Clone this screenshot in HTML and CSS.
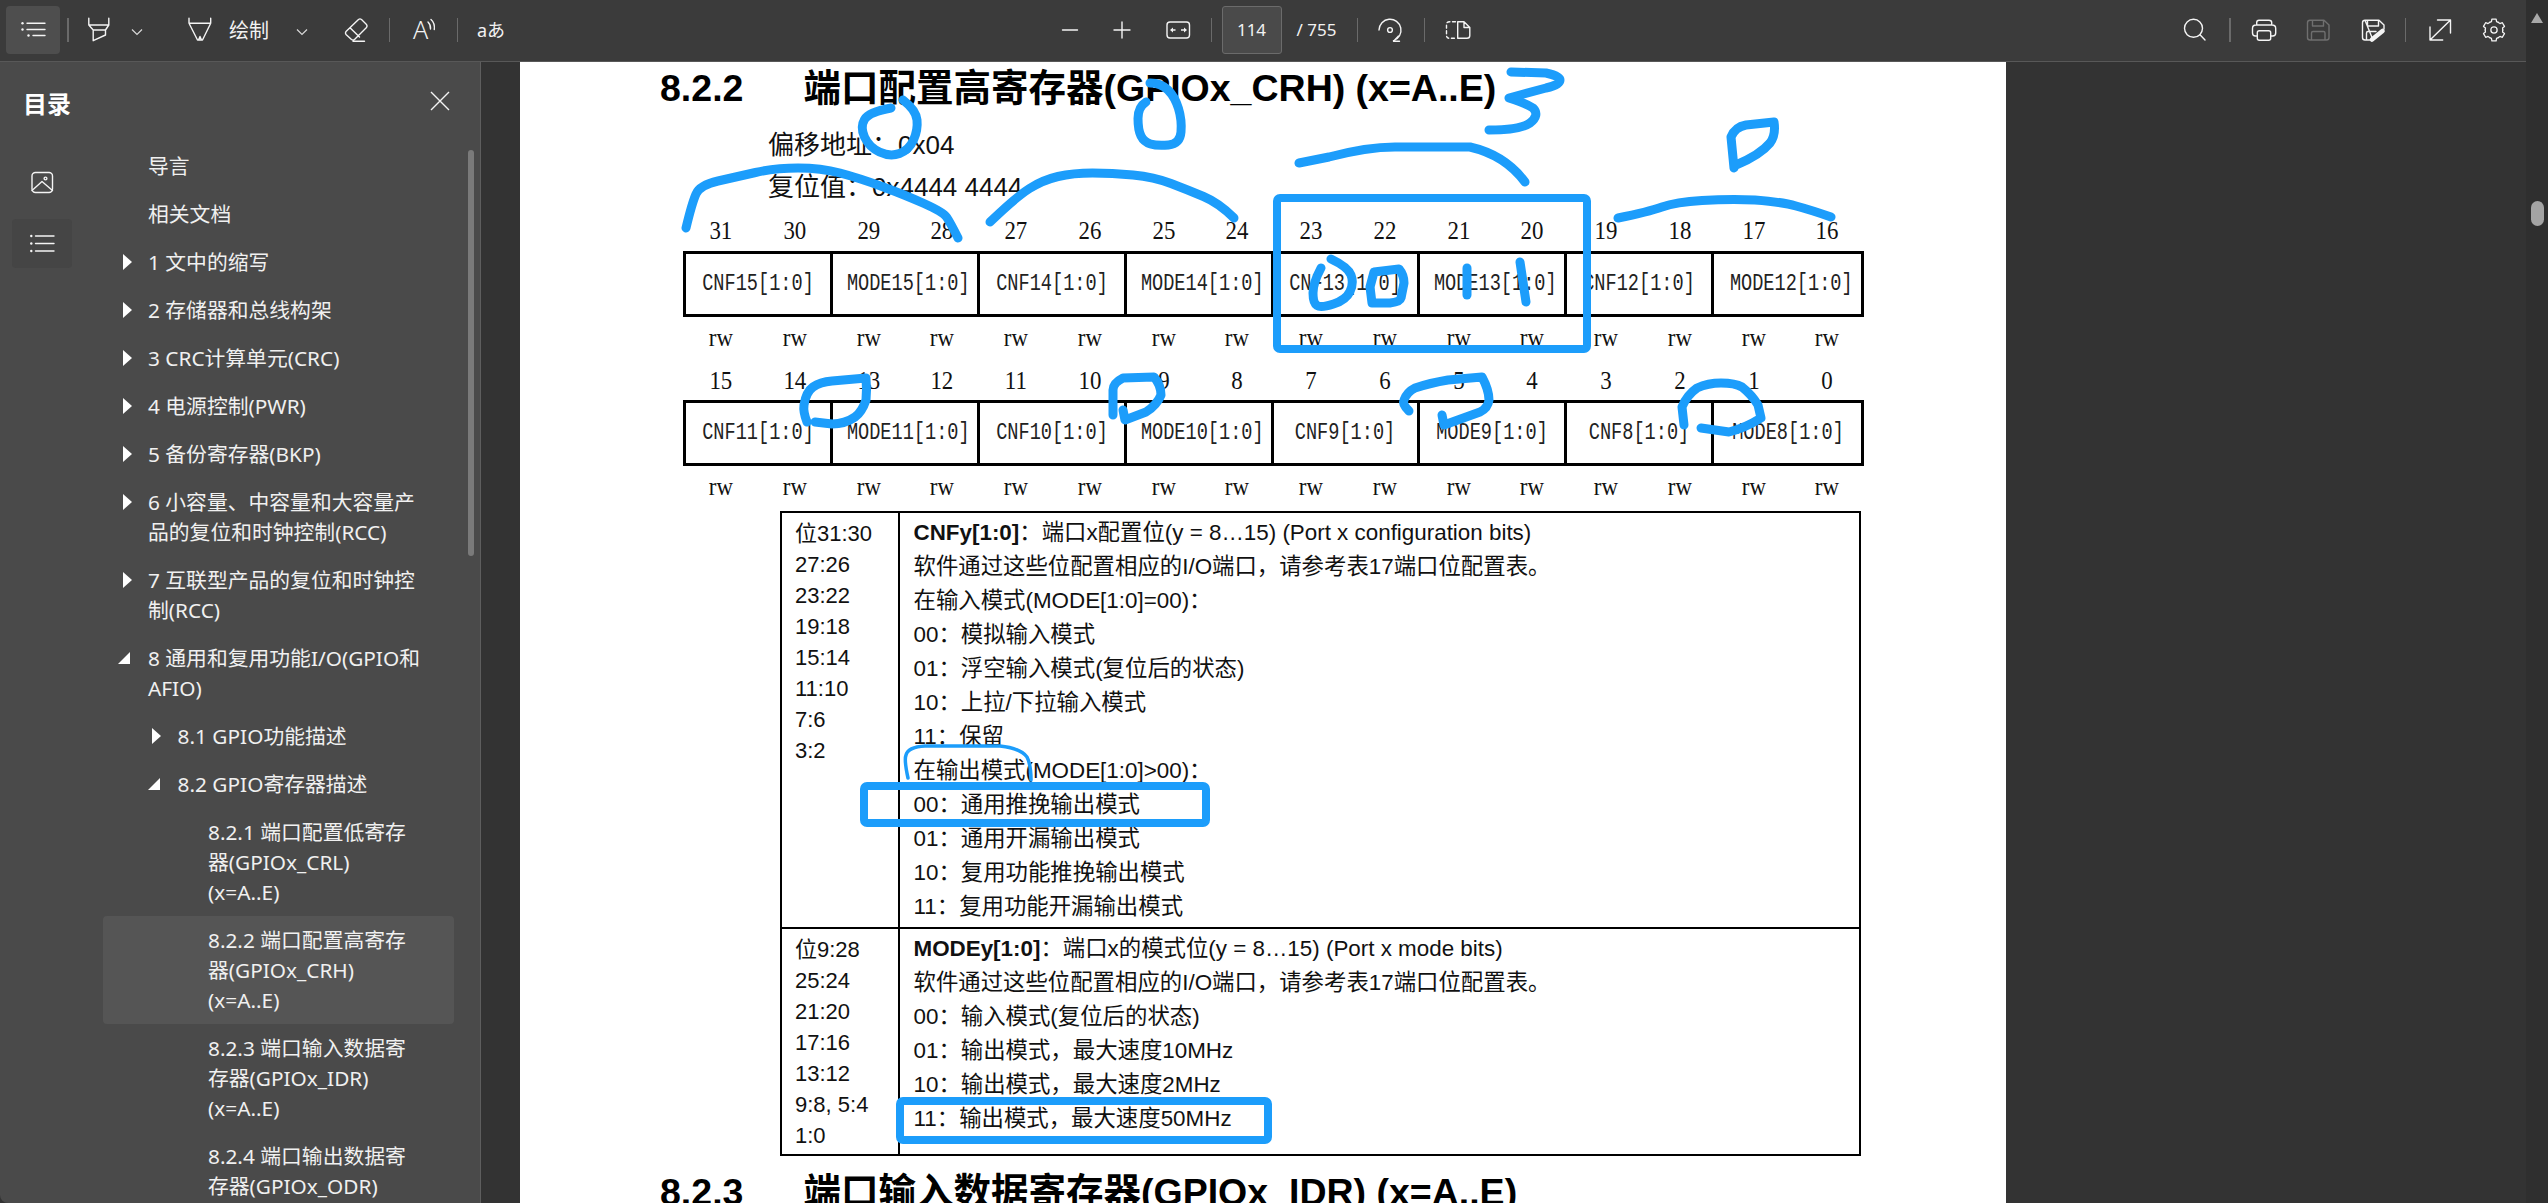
FILE: index.html
```html
<!DOCTYPE html>
<html lang="zh-CN">
<head>
<meta charset="utf-8">
<title>STM32 参考手册</title>
<link rel="stylesheet" href="styles.css">
</head>
<body>
<div class="app">
  <div class="window">
    <header class="toolbar">
      <div class="tb-group tb-left">
        <button class="tbtn tbtn-toggle"><svg class="ico" viewBox="21 18 24 24"><path d="M27 23.3H45M27 29.5H45M33 35.5H45"/><circle class="dot" cx="22.5" cy="23.3" r="1.2"/><circle class="dot" cx="22.5" cy="29.5" r="1.2"/><circle class="dot" cx="28.5" cy="35.5" r="1.2"/></svg></button>
        <span class="sep sep-a"></span>
        <button class="tbtn"><svg class="ico" viewBox="86.5 18 24 24"><path d="M88.3 18.3V25L92.7 30H105L108.3 25V18.3M88.3 25H108.3M92.7 30V40.7L105 35V30"/></svg></button>
        <svg class="chev" viewBox="0 0 20 24"><path d="M5 11.5L10 16.5L15 11.5"/></svg>
        <button class="tbtn tbtn-draw"><svg class="ico" viewBox="188 18 24 24"><path d="M189 18.3V23.3L197.5 40H202.5L210.7 23.3V18.3M189 23.3H210.7M198.5 40L200 36.5L201.5 40"/></svg></button>
        <span class="tb-label">绘制</span>
        <svg class="chev chev-draw" viewBox="0 0 20 24"><path d="M5 11.5L10 16.5L15 11.5"/></svg>
        <button class="tbtn tbtn-eraser"><svg class="ico" viewBox="344 18 24 24"><path d="M346 31.5L358.5 19.5Q360 18.3 361.5 19.5L366.5 24.5Q367.7 26 366.5 27.5L354.5 39.5Q353 40.5 351.5 39.5L346 34.5Q344.8 33 346 31.5ZM350 27.8L359.5 37M353 41.2H364.5"/></svg></button>
        <span class="sep sep-b"></span>
        <button class="tbtn"><svg class="ico" viewBox="413 18 24 24"><text class="ico-text" x="413" y="38.5">A</text><path d="M428 22Q431 25 430.5 29M431 19.5Q435 23 434.3 29.5"/></svg></button>
        <span class="sep sep-c"></span>
        <span class="tb-lang">aあ</span>
      </div>
      <div class="tb-group tb-center">
        <button class="tbtn"><svg class="ico" viewBox="1057.5 18 24 24"><path d="M1062 30H1077"/></svg></button>
        <button class="tbtn tbtn-plus"><svg class="ico" viewBox="1110 18 24 24"><path d="M1114 30H1130M1122 22V38"/></svg></button>
        <button class="tbtn tbtn-fit"><svg class="ico" viewBox="1165.5 18 24 24"><rect x="1166.5" y="22" width="22.5" height="16" rx="3"/><path class="fill" d="M1169.5 30L1172.5 27.5V29.3H1175V30.7H1172.5V32.5ZM1186.5 30L1183.5 27.5V29.3H1180.5V30.7H1183.5V32.5Z"/></svg></button>
        <span class="sep sep-d"></span>
        <div class="page-box">114</div>
        <span class="page-total">/ 755</span>
        <span class="sep sep-e"></span>
        <button class="tbtn"><svg class="ico" viewBox="1377 18 24 24"><path d="M1378 30A11 11 0 1 1 1392.5 40.7M1397.5 36L1392.5 41.2H1398.5"/><circle cx="1389" cy="30" r="2.4"/></svg></button>
        <span class="sep sep-f"></span>
        <button class="tbtn"><svg class="ico" viewBox="1445 18 24 24"><path d="M1456.7 21.7H1463L1468.8 27.5V35.5Q1468.8 38.3 1466 38.3H1456.7ZM1463 21.7V27.5H1468.8"/><path class="dash" d="M1454.5 21.7H1448.5Q1445.5 21.7 1445.5 24.7V35.3Q1445.5 38.3 1448.5 38.3H1454.5"/></svg></button>
      </div>
      <div class="tb-group tb-right">
        <button class="tbtn"><svg class="ico" viewBox="2184.5 18 24 24"><circle cx="2195" cy="28.3" r="9"/><path d="M2201.5 34.8L2206.5 40"/></svg></button>
        <span class="sep sep-g"></span>
        <button class="tbtn"><svg class="ico" viewBox="2252 18 24 24"><path d="M2256.7 25V22.5Q2256.7 20.3 2259 20.3H2269Q2271.7 20.3 2271.7 22.5V25M2257.3 36H2255.5Q2252.5 36 2252.5 33V28.5Q2252.5 25 2256 25H2272Q2275.7 25 2275.7 28.5V33Q2275.7 36 2272.7 36H2270.7"/><rect x="2257.3" y="30.7" width="13.4" height="9.5" rx="2"/></svg></button>
        <button class="tbtn tbtn-n"><svg class="ico ico-dim" viewBox="2306 18 24 24"><path d="M2310 20.3H2324L2329 25V37.5Q2329 40 2326.5 40H2310Q2307.5 40 2307.5 37.5V22.8Q2307.5 20.3 2310 20.3ZM2312.5 20.3V26H2323.5V20.3M2311.5 40V33Q2311.5 31.5 2313 31.5H2323.5Q2325 31.5 2325 33V40"/></svg></button>
        <button class="tbtn tbtn-m"><svg class="ico" viewBox="2361 18 24 24"><path d="M2365 20.3H2379L2384 25V29M2373 40H2365Q2362.5 40 2362.5 37.5V22.8Q2362.5 20.3 2365 20.3ZM2367.5 20.3V26H2378.5V20.3M2366.5 40V33Q2366.5 31.5 2368 31.5H2376"/><path class="pencil" d="M2372 39.5L2382.5 31"/></svg></button>
        <span class="sep sep-h"></span>
        <button class="tbtn"><svg class="ico" viewBox="2427 18 24 24"><path d="M2429 40L2449.5 20M2436.5 20H2449.5V33M2429 27V40H2441.7"/></svg></button>
        <button class="tbtn tbtn-n"><svg class="ico" viewBox="-13 -13 26 26"><defs><path id="tooth" d="M8.23 -4.75L9.08 -2.78L11.78 -2.29L11.78 2.29L9.08 2.78L8.23 4.75"/></defs><use href="#tooth" transform="rotate(30)"/><use href="#tooth" transform="rotate(90)"/><use href="#tooth" transform="rotate(150)"/><use href="#tooth" transform="rotate(210)"/><use href="#tooth" transform="rotate(270)"/><use href="#tooth" transform="rotate(330)"/><circle cx="0" cy="0" r="3.4"/></svg></button>
      </div>
    </header>
    <div class="content">
      <aside class="sidebar">
        <div class="side-head">
          <h2 class="side-title">目录</h2>
          <svg class="side-close" viewBox="0 0 20 20"><path d="M1 1L19 19M19 1L1 19"/></svg>
        </div>
        <div class="side-body">
          <div class="side-tabs">
            <div class="side-tab"><svg class="ico" viewBox="30 170.5 24 24"><rect x="32" y="172" width="20.5" height="20" rx="3.5"/><path d="M32 190L42 181L52.5 190"/><circle cx="45.5" cy="178" r="1.4"/></svg></div>
            <div class="side-tab side-tab-on"><svg class="ico" viewBox="30 231 24 24"><path d="M35.5 235H54M35.5 242.5H54M35.5 250H54"/><circle class="dot" cx="31.3" cy="235" r="1.2"/><circle class="dot" cx="31.3" cy="242.5" r="1.2"/><circle class="dot" cx="31.3" cy="250" r="1.2"/></svg></div>
          </div>
          <nav class="tree">
            <div class="row l1"><span class="slot"></span><span class="txt">导言</span></div>
            <div class="row l1"><span class="slot"></span><span class="txt">相关文档</span></div>
            <div class="row l1"><span class="slot"><i class="tri"></i></span><span class="txt">1 文中的缩写</span></div>
            <div class="row l1"><span class="slot"><i class="tri"></i></span><span class="txt">2 存储器和总线构架</span></div>
            <div class="row l1"><span class="slot"><i class="tri"></i></span><span class="txt">3 CRC计算单元(CRC)</span></div>
            <div class="row l1"><span class="slot"><i class="tri"></i></span><span class="txt">4 电源控制(PWR)</span></div>
            <div class="row l1"><span class="slot"><i class="tri"></i></span><span class="txt">5 备份寄存器(BKP)</span></div>
            <div class="row l1"><span class="slot"><i class="tri"></i></span><span class="txt">6 小容量、中容量和大容量产<br>品的复位和时钟控制(RCC)</span></div>
            <div class="row l1"><span class="slot"><i class="tri"></i></span><span class="txt">7 互联型产品的复位和时钟控<br>制(RCC)</span></div>
            <div class="row l1"><span class="slot"><i class="tri open"></i></span><span class="txt">8 通用和复用功能I/O(GPIO和<br>AFIO)</span></div>
            <div class="row l2"><span class="slot"><i class="tri"></i></span><span class="txt">8.1 GPIO功能描述</span></div>
            <div class="row l2"><span class="slot"><i class="tri open"></i></span><span class="txt">8.2 GPIO寄存器描述</span></div>
            <div class="row l3"><span class="slot"></span><span class="txt">8.2.1 端口配置低寄存<br>器(GPIOx_CRL)<br>(x=A..E)</span></div>
            <div class="row l3 selected"><span class="slot"></span><span class="txt">8.2.2 端口配置高寄存<br>器(GPIOx_CRH)<br>(x=A..E)</span></div>
            <div class="row l3"><span class="slot"></span><span class="txt">8.2.3 端口输入数据寄<br>存器(GPIOx_IDR)<br>(x=A..E)</span></div>
            <div class="row l3"><span class="slot"></span><span class="txt">8.2.4 端口输出数据寄<br>存器(GPIOx_ODR)</span></div>
          </nav>
          <div class="side-thumb"></div>
        </div>
      </aside>
      <main class="viewer">
        <article class="page">
          <h3 class="sec"><span class="sec-no">8.2.2</span><span>端口配置高寄存器(GPIOx_CRH) (x=A..E)</span></h3>
          <p class="meta">偏移地址：0x04</p>
          <p class="meta">复位值：0x4444 4444</p>

          <div class="bits bits-first">
            <span class="bit">31</span><span class="bit">30</span><span class="bit">29</span><span class="bit">28</span><span class="bit">27</span><span class="bit">26</span><span class="bit">25</span><span class="bit">24</span><span class="bit">23</span><span class="bit">22</span><span class="bit">21</span><span class="bit">20</span><span class="bit">19</span><span class="bit">18</span><span class="bit">17</span><span class="bit">16</span>
          </div>
          <div class="reg">
            <div class="cell"><span>CNF15[1:0]</span></div><div class="cell"><span>MODE15[1:0]</span></div><div class="cell"><span>CNF14[1:0]</span></div><div class="cell"><span>MODE14[1:0]</span></div><div class="cell"><span>CNF13[1:0]</span></div><div class="cell"><span>MODE13[1:0]</span></div><div class="cell"><span>CNF12[1:0]</span></div><div class="cell"><span>MODE12[1:0]</span></div>
          </div>
          <div class="bits bits-rw">
            <span class="bit">rw</span><span class="bit">rw</span><span class="bit">rw</span><span class="bit">rw</span><span class="bit">rw</span><span class="bit">rw</span><span class="bit">rw</span><span class="bit">rw</span><span class="bit">rw</span><span class="bit">rw</span><span class="bit">rw</span><span class="bit">rw</span><span class="bit">rw</span><span class="bit">rw</span><span class="bit">rw</span><span class="bit">rw</span>
          </div>

          <div class="bits bits-second">
            <span class="bit">15</span><span class="bit">14</span><span class="bit">13</span><span class="bit">12</span><span class="bit">11</span><span class="bit">10</span><span class="bit">9</span><span class="bit">8</span><span class="bit">7</span><span class="bit">6</span><span class="bit">5</span><span class="bit">4</span><span class="bit">3</span><span class="bit">2</span><span class="bit">1</span><span class="bit">0</span>
          </div>
          <div class="reg">
            <div class="cell"><span>CNF11[1:0]</span></div><div class="cell"><span>MODE11[1:0]</span></div><div class="cell"><span>CNF10[1:0]</span></div><div class="cell"><span>MODE10[1:0]</span></div><div class="cell"><span>CNF9[1:0]</span></div><div class="cell"><span>MODE9[1:0]</span></div><div class="cell"><span>CNF8[1:0]</span></div><div class="cell"><span>MODE8[1:0]</span></div>
          </div>
          <div class="bits bits-rw">
            <span class="bit">rw</span><span class="bit">rw</span><span class="bit">rw</span><span class="bit">rw</span><span class="bit">rw</span><span class="bit">rw</span><span class="bit">rw</span><span class="bit">rw</span><span class="bit">rw</span><span class="bit">rw</span><span class="bit">rw</span><span class="bit">rw</span><span class="bit">rw</span><span class="bit">rw</span><span class="bit">rw</span><span class="bit">rw</span>
          </div>

          <div class="desc">
            <div class="desc-row">
              <div class="desc-bits">位31:30<br>27:26<br>23:22<br>19:18<br>15:14<br>11:10<br>7:6<br>3:2</div>
              <div class="desc-text">
                <p><b>CNFy[1:0]</b>：端口x配置位(y = 8…15) (Port x configuration bits)</p>
                <p>软件通过这些位配置相应的I/O端口，请参考表17端口位配置表。</p>
                <p>在输入模式(MODE[1:0]=00)：</p>
                <p>00：模拟输入模式</p>
                <p>01：浮空输入模式(复位后的状态)</p>
                <p>10：上拉/下拉输入模式</p>
                <p>11：保留</p>
                <p>在输出模式(MODE[1:0]&gt;00)：</p>
                <p>00：通用推挽输出模式</p>
                <p>01：通用开漏输出模式</p>
                <p>10：复用功能推挽输出模式</p>
                <p>11：复用功能开漏输出模式</p>
              </div>
            </div>
            <div class="desc-row desc-row-last">
              <div class="desc-bits">位9:28<br>25:24<br>21:20<br>17:16<br>13:12<br>9:8, 5:4<br>1:0</div>
              <div class="desc-text">
                <p><b>MODEy[1:0]</b>：端口x的模式位(y = 8…15) (Port x mode bits)</p>
                <p>软件通过这些位配置相应的I/O端口，请参考表17端口位配置表。</p>
                <p>00：输入模式(复位后的状态)</p>
                <p>01：输出模式，最大速度10MHz</p>
                <p>10：输出模式，最大速度2MHz</p>
                <p>11：输出模式，最大速度50MHz</p>
              </div>
            </div>
          </div>

          <h3 class="sec sec-next"><span class="sec-no">8.2.3</span><span>端口输入数据寄存器(GPIOx_IDR) (x=A..E)</span></h3>
        </article>
      </main>
    </div>
  </div>
  <div class="vscroll">
    <i class="vs-up"></i>
    <i class="vs-thumb"></i>
  </div>
</div>

<svg class="ink" viewBox="0 0 2548 1203" width="2548" height="1203">
  <path d="M891 108Q869 112 864.5 119.5Q860 127 864.5 137Q869 147 879.5 152Q890 157 899.5 153.5Q909 150 913.5 140Q918 130 917 120Q916 110 903 100"/>
  <path d="M686 228Q692 203 696 194Q700 185 718 181Q736 177 755.5 172.5Q775 168 798 168Q821 168 840 173Q859 178 882 186.5Q905 195 924 203.5Q943 212 946.5 217Q950 222 958 238"/>
  <path d="M1146 102Q1138 107 1138 118.5Q1138 130 1141 136Q1144 142 1150.5 144Q1157 146 1168.5 145Q1180 144 1181 132Q1182 120 1178.5 108.5Q1175 97 1168 90Q1161 83 1150 83"/>
  <path d="M990 222Q1016 197 1029.5 188.5Q1043 180 1058 176.5Q1073 173 1092.5 173Q1112 173 1133 175Q1154 177 1171 183.5Q1188 190 1203.5 196.5Q1219 203 1234 218"/>
  <path d="M1511 72L1546 73Q1560 76 1560 80Q1560 85 1546 88L1509 98Q1525 103 1533 108Q1540 115 1530 123Q1520 130 1489 130"/>
  <path d="M1299 163L1329 157Q1370 146 1400 147L1470 147Q1505 155 1525 182"/>
  <path d="M1734 168L1731 137Q1735 127 1746 125L1774 122Q1776 135 1770 143Q1760 155 1736 165"/>
  <path d="M1618 218Q1648 212 1662 207Q1676 202 1702 200.5Q1729 199 1755 200Q1782 202 1796 206Q1811 210 1831 217"/>
  <rect x="1277" y="198" width="310" height="151" rx="3"/>
  <path d="M1321 268Q1313 283 1313 293Q1313 303 1317 305.5Q1321 308 1333.5 304Q1346 300 1350 291.5Q1354 283 1351 275Q1348 267 1331 259"/>
  <path d="M1374 272L1399 269Q1404 275 1404 283L1401 298Q1400 302 1390 303L1372 303L1370 287Z"/>
  <path d="M1467 268V295"/>
  <path d="M1520 262L1526 302"/>
  <path d="M807 422Q803 412 804 405Q806 392 813 387Q820 382 832 381L866 378Q867 390 866 400Q862 412 855 417Q845 424 832 424L815 422"/>
  <path d="M1113 415V390Q1113 383 1123 378L1154 377Q1161 385 1161 395Q1157 405 1146 412L1125 420L1123 410"/>
  <path d="M1409 411Q1402 404 1404 400Q1407 392 1415 388Q1430 383 1448 380L1482 377Q1489 390 1489 400Q1488 408 1480 412L1444 425L1442 415"/>
  <path d="M1684 425L1682 407Q1687 395 1697 388Q1708 383 1721 383Q1735 383 1742 387Q1752 395 1758 405L1761 418Q1745 428 1729 432L1701 428"/>
  <path class="ink-thin" d="M908 778Q904 760 906 755Q908 747 925 746L1000 746Q1020 748 1027 757Q1031 765 1031 780"/>
  <rect x="864" y="786" width="342" height="37" rx="3"/>
  <rect x="900" y="1101" width="368" height="39" rx="3"/>
</svg>
</body>
</html>
```
FILE: styles.css
```css
* { box-sizing: border-box; }
html, body { margin: 0; padding: 0; }
body {
  width: 2548px;
  height: 1203px;
  overflow: hidden;
  position: relative;
  background: #333;
  font-family: "Noto Sans", "Noto Sans CJK SC", sans-serif;
  color: #f2f2f2;
}
.app { display: flex; height: 1203px; }
.window { width: 2526px; display: flex; flex-direction: column; }

/* toolbar */
.toolbar {
  height: 62px;
  flex: none;
  background: #3b3b3b;
  border-bottom: 1px solid #585858;
  display: flex;
  align-items: center;
  padding-bottom: 1px;
}
.tb-group { display: flex; align-items: center; height: 48px; }
.tb-left { margin-left: 6px; }
.tb-center { margin-left: 530.5px; }
.tb-right { margin-left: auto; margin-right: 8.5px; }
.tbtn {
  width: 48px;
  height: 48px;
  flex: none;
  padding: 0;
  border: 0;
  background: transparent;
  display: flex;
  align-items: center;
  justify-content: center;
}
.tbtn-toggle { width: 54px; background: #4e4e4e; border-radius: 4px; }
.tbtn-draw { margin-left: 29px; }
.tbtn-eraser { margin-left: 20px; }
.tbtn-plus { margin-left: 4.5px; }
.tbtn-fit { margin-left: 7.5px; }
.tbtn-n { margin-left: 6px; }
.tbtn-m { margin-left: 7px; }
.ico { width: 24px; height: 24px; overflow: visible; fill: none; stroke: #f4f4f4; stroke-width: 1.4; stroke-linecap: round; stroke-linejoin: round; }
.ico .dot, .ico .fill { fill: #f4f4f4; stroke: none; }
.ico .dash { stroke-dasharray: 3 2.6; }
.ico .pencil { stroke-width: 4.6; }
.ico-dim { stroke: #6f6f6f; }
.ico-text { font: 300 25px "Noto Sans", sans-serif; fill: #f4f4f4; stroke: none; }
.chev { width: 20px; height: 24px; flex: none; margin-left: 4.5px; fill: none; stroke: #d8d8d8; stroke-width: 1.2; }
.chev-draw { margin-left: 22px; }
.tb-label { width: 41px; margin-left: 5px; font-size: 20px; line-height: 48px; white-space: nowrap; font-family: "Noto Sans CJK SC", sans-serif; }
.tb-lang { width: 48px; text-align: center; font-size: 18px; line-height: 48px; white-space: nowrap; }
.sep { width: 1px; height: 24px; flex: none; background: #6a6a6a; }
.sep-a { margin: 0 5.5px 0 7px; width: 2px; }
.sep-b { margin: 0 11px 0 9px; }
.sep-c { margin: 0 9px 0 8px; }
.sep-d { margin: 0 9.5px; }
.sep-e { margin: 0 8.5px 0 20px; }
.sep-f { margin: 0 9.5px; }
.sep-g { margin: 0 9.5px 0 9.5px; width: 2px; }
.sep-h { margin: 0 9.5px 0 8px; }
.page-box {
  width: 60px;
  height: 48px;
  background: #4a4a4a;
  border: 1px solid #6b6b6b;
  border-radius: 3px;
  text-align: center;
  font-size: 17px;
  line-height: 46px;
}
.page-total { margin-left: 15px; font-size: 17px; line-height: 48px; white-space: nowrap; width: 40px; }

/* main split */
.content { flex: 1; display: flex; min-height: 0; }
.sidebar {
  width: 481px;
  flex: none;
  background: #4a4a4a;
  border-right: 1px solid #5e5e5e;
  border-bottom-left-radius: 8px;
  overflow: hidden;
  display: flex;
  flex-direction: column;
}
.side-head {
  height: 80px;
  flex: none;
  display: flex;
  align-items: center;
  justify-content: space-between;
  padding: 1px 30px 0 23px;
}
.side-title { margin: 0; font-size: 24px; font-weight: 700; color: #fff; font-family: "Noto Sans CJK SC", sans-serif; line-height: 32px; }
.side-close { width: 20px; height: 20px; fill: none; stroke: #f4f4f4; stroke-width: 1.4; margin-top: -4px; }
.side-body { flex: 1; display: flex; min-height: 0; }
.side-tabs { width: 103px; flex: none; padding: 16px 31px 0 12px; display: flex; flex-direction: column; gap: 12px; }
.side-tab { width: 60px; height: 49px; display: flex; align-items: center; justify-content: center; border-radius: 4px; }
.side-tab-on { background: #454545; }
.tree { width: 351px; flex: none; overflow: hidden; font-size: 20.8px; color: #f0f0f0; }
.row { display: flex; padding: 9px 0; line-height: 30px; white-space: nowrap; border-radius: 4px; }
.slot { flex: none; display: block; width: 45px; }
.l2 .slot { width: 74.6px; }
.l3 .slot { width: 105px; }
.selected { background: #555; }
.tri {
  display: block;
  width: 0;
  height: 0;
  margin: 7px 0 0 20px;
  border-style: solid;
  border-width: 8px 0 8px 9px;
  border-color: transparent transparent transparent #fff;
}
.l2 .tri { margin-left: 49px; }
.tri.open {
  margin: 9px 0 0 15px;
  border-width: 0 0 12px 12px;
  border-color: transparent transparent #fff transparent;
}
.l2 .tri.open { margin-left: 45px; }
.side-thumb { width: 6px; height: 406px; margin: 8px 0 0 14px; background: #7a7a7a; border-radius: 3px; flex: none; }

.viewer { flex: 1; min-width: 0; overflow: hidden; background: #333; padding-left: 39px; }
.page {
  width: 1486px;
  height: 100%;
  background: #fff;
  color: #000;
  padding: 4px 0 0 140px;
  overflow: hidden;
  font-family: "Liberation Sans", "Noto Sans CJK SC", sans-serif;
}
.sec { margin: 0; display: flex; font-size: 37.5px; line-height: 44px; font-weight: 700; white-space: nowrap; }
.sec-no { width: 143.5px; flex: none; }
.sec-next { margin-top: 14px; }
.meta { margin: 0 0 0 108px; font-size: 26px; line-height: 42px; color: #111; }
.sec + .meta { margin-top: 14px; }

.bits {
  width: 1180px;
  margin-left: 24px;
  display: grid;
  grid-template-columns: repeat(16, minmax(0, 1fr));
  height: 32px;
  font: 26px/32px "Liberation Serif", serif;
  color: #111;
}
.bit { text-align: center; transform: scaleX(.88); }
.bits-first { margin-top: 7px; }
.bits-second { margin-top: 11px; }
.bits-rw { margin-top: 5px; }
.reg {
  width: 1181px;
  height: 66px;
  margin: 3.5px 0 0 23px;
  border: 3px solid #000;
  display: grid;
  grid-template-columns: repeat(8, minmax(0, 1fr));
}
.cell {
  min-width: 0;
  border-right: 3px solid #000;
  display: flex;
  align-items: center;
  justify-content: center;
  font: 24px/30px "Liberation Mono", monospace;
  color: #222;
  white-space: nowrap;
}
.cell:last-child { border-right: 0; }
.cell span { display: block; flex: none; width: 150px; text-align: center; transform: scaleX(.775); }

.desc { width: 1081px; margin: 8px 0 0 120px; border: 2px solid #000; }
.desc-row { display: flex; border-bottom: 2px solid #000; }
.desc-row-last { border-bottom: 0; padding-bottom: 15px; }
.desc-bits { width: 118px; flex: none; padding: 4.5px 0 0 13px; font-size: 22px; line-height: 31px; color: #111; border-right: 2px solid #000; margin-bottom: -15px; white-space: nowrap; }
.desc-row:first-child .desc-bits { margin-bottom: 0; }
.desc-text { flex: 1; padding: 3px 0 3px 13.5px; font-size: 22.4px; line-height: 34px; color: #111; }
.desc-text p { margin: 0; white-space: nowrap; }

/* vertical scrollbar */
.vscroll { width: 22px; flex: none; background: #2f2f2f; position: relative; }
.vs-up { position: absolute; left: 5px; top: 13px; width: 0; height: 0; border-style: solid; border-width: 0 6px 10px 6px; border-color: transparent transparent #a8a8a8 transparent; }
.vs-thumb { position: absolute; left: 5px; top: 201px; width: 13px; height: 25px; border-radius: 7px; background: #a4a4a4; }

/* pen annotations laid over the document */
.ink { position: absolute; left: 0; top: 0; pointer-events: none; fill: none; stroke: #1c9dfb; stroke-width: 9; stroke-linecap: round; stroke-linejoin: round; }
.ink rect { stroke-width: 8; }
.ink .ink-thin { stroke-width: 3.5; }
```
